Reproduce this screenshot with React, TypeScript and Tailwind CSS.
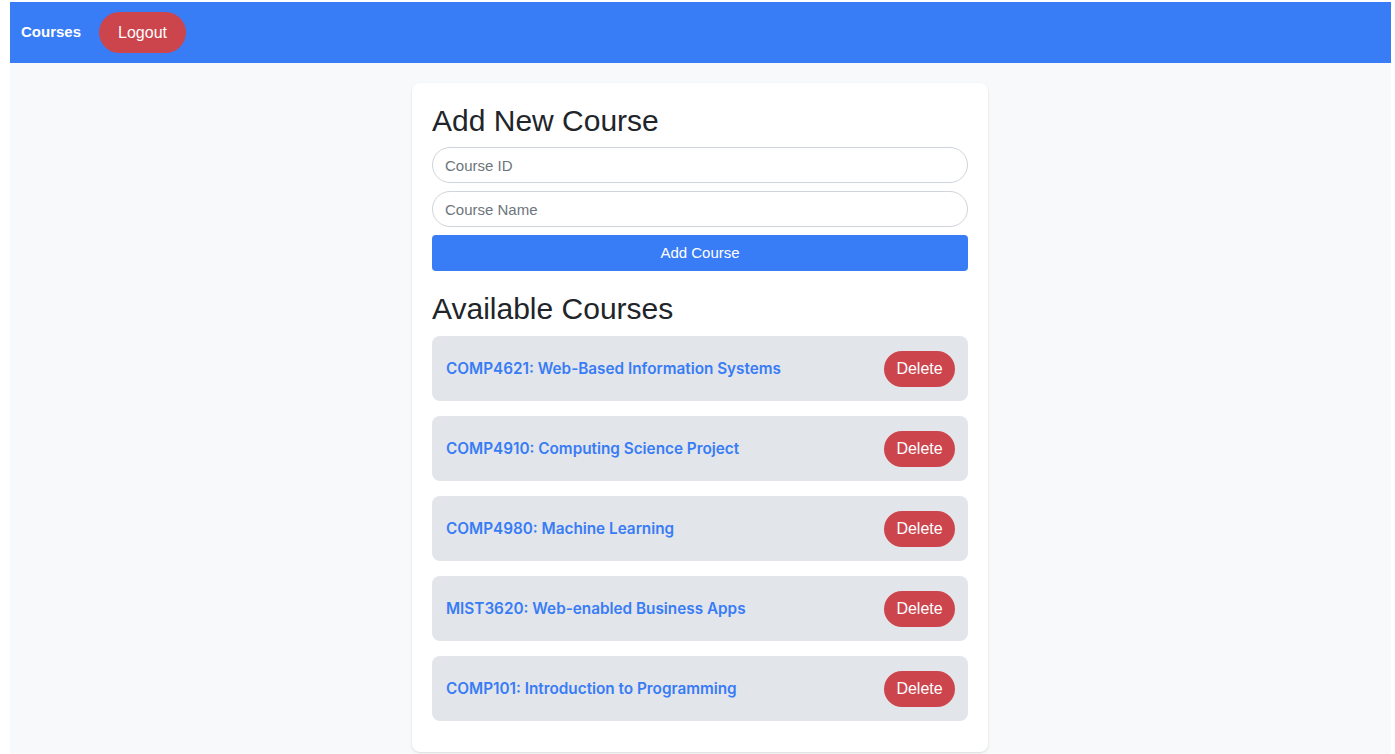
import React from 'react';

const courses = [
  'COMP4621: Web-Based Information Systems',
  'COMP4910: Computing Science Project',
  'COMP4980: Machine Learning',
  'MIST3620: Web-enabled Business Apps',
  'COMP101: Introduction to Programming',
];

const App: React.FC = () => {
  return (
    <div
      className="bg-white min-h-screen pl-[10px] pr-[4px] pt-[2px]"
      style={{ fontFamily: '"Liberation Sans", Arial, sans-serif' }}
    >
      <div className="bg-[#f8f9fa] h-[752px] flex flex-col">
        <nav className="bg-[#387cf6] h-[61px] flex items-center px-[11px] gap-[18px]">
          <span className="text-white font-bold text-[15px]">Courses</span>
          <button className="bg-[#cc454c] text-white text-[16px] rounded-full w-[87px] h-[41px] pt-px">Logout</button>
        </nav>

        <div className="flex justify-center pt-[20px] pr-px">
          <div className="bg-white w-[576px] h-[669px] rounded-lg shadow-sm px-5 pt-5">
            <h2 className="text-[30px] leading-[36px] text-[#212529] mb-2">Add New Course</h2>
            <div className="flex flex-col gap-2">
              <input
                placeholder="Course ID"
                className="h-[36px] rounded-full border border-[#ced4da] px-3 text-[15px] placeholder:text-[#6c757d] outline-none"
              />
              <input
                placeholder="Course Name"
                className="h-[36px] rounded-full border border-[#ced4da] px-3 text-[15px] placeholder:text-[#6c757d] outline-none"
              />
              <button className="h-[36px] rounded bg-[#387cf6] text-white text-[15px]">Add Course</button>
            </div>

            <h2 className="text-[30px] leading-[36px] text-[#212529] mt-5 mb-[9px]">Available Courses</h2>
            <ul className="flex flex-col gap-[15px]">
              {courses.map((c) => (
                <li
                  key={c}
                  className="h-[65px] bg-[#e2e5e9] rounded-lg flex items-center justify-between pl-[14px] pr-[13px]"
                >
                  <span className="text-[#387cf6] font-semibold text-[15.3px] font-['Inter'] pt-px">{c}</span>
                  <button className="bg-[#cc454c] text-white text-[16px] rounded-full w-[71px] h-[36px] pt-px">Delete</button>
                </li>
              ))}
            </ul>
          </div>
        </div>
      </div>
    </div>
  );
};

export default App;
